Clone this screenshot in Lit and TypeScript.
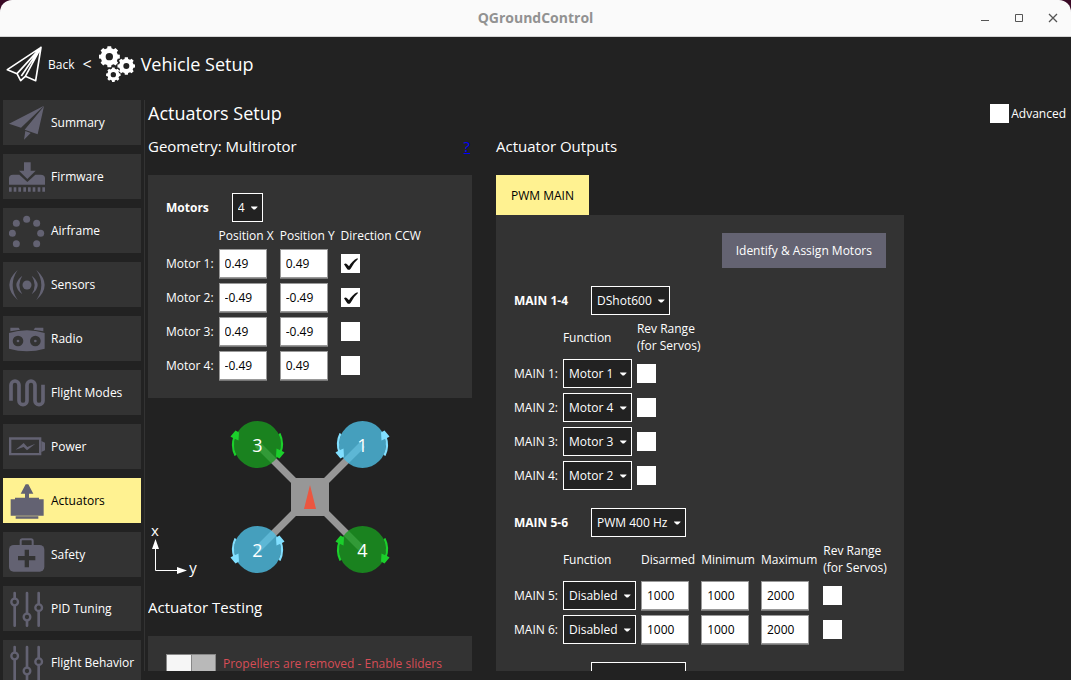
import { LitElement, html, svg, css, nothing } from "lit";
import { customElement, property } from "lit/decorators.js";

const gear = (cx: number, cy: number, outer: number, inner: number, hole: number, teeth = 8) => {
  const points: string[] = [];
  const step = (Math.PI * 2) / teeth;
  for (let i = 0; i < teeth; i++) {
    const a = i * step - Math.PI / 2;
    for (const [offset, radius] of [[-0.32, inner], [-0.22, outer], [0.22, outer], [0.32, inner]]) {
      const t = a + offset * step;
      points.push(`${(cx + radius * Math.cos(t)).toFixed(1)} ${(cy + radius * Math.sin(t)).toFixed(1)}`);
    }
  }
  return `M${points.join("L")}Z M${cx - hole} ${cy}a${hole} ${hole} 0 1 0 ${hole * 2} 0a${hole} ${hole} 0 1 0 ${-hole * 2} 0Z`;
};

const sliders = svg`
  <path d="M17 6V104M54 6V104M89 6V104" stroke="currentColor" stroke-width="8" stroke-linecap="round"/>
  <g fill="#333" stroke="currentColor" stroke-width="7">
    <circle cx="17" cy="33" r="10"/><circle cx="54" cy="78" r="10"/><circle cx="89" cy="50" r="10"/>
  </g>`;

const icons: Record<string, unknown> = {
  plane: svg`<path d="M105 4L4 71L33 83L44 104L58 91L89 104ZM105 4L33 83M105 4L46 90M105 4L58 91" fill="none" stroke="currentColor" stroke-width="5" stroke-linejoin="round"/>`,
  gears: svg`<path fill-rule="evenodd" d="${gear(31, 32, 32, 26, 11)}${gear(82, 60, 27, 22, 9)}${gear(43, 86, 22, 18, 8)}"/>`,
  summary: svg`<path d="M105 2L0 56L36 68ZM105 4L47 74L86 88ZM49 78L65 84L45 104Z"/>`,
  firmware: svg`<path d="M45 10H65V35H80L55 60L30 35H45ZM0 77V58Q0 47 12 47H31L55 69L79 47H95Q108 47 108 58V77ZM0 85h8v13h-8zM14 85h8v13h-8zM28 85h8v13h-8zM43 85h8v13h-8zM57 85h8v13h-8zM71 85h8v13h-8zM86 85h8v13h-8zM100 85h8v13h-8z"/>`,
  airframe: svg`<circle cx="53" cy="19" r="10.5"/><circle cx="22" cy="31" r="10.5"/><circle cx="83" cy="31" r="10.5"/><circle cx="10" cy="61" r="10.5"/><circle cx="95" cy="61" r="10.5"/><circle cx="22" cy="92" r="10.5"/><circle cx="83" cy="92" r="10.5"/>`,
  sensors: svg`<circle cx="54" cy="54" r="13.5"/><path d="M26 9Q-24 54 26 99Q-4 54 26 9ZM40 26Q4 54 40 82Q22 54 40 26ZM82 9Q132 54 82 99Q112 54 82 9ZM68 26Q104 54 68 82Q86 54 68 26Z"/>`,
  radio: svg`<path d="M4 20H29L33 26L4 31ZM103 20H78L74 26L103 31Z"/><path d="M0 36Q54 20 107 36V83Q54 98 0 83Z"/><g fill="#333"><circle cx="27" cy="60" r="16"/><circle cx="79" cy="60" r="16"/></g><circle cx="27" cy="60" r="4"/><circle cx="79" cy="60" r="4"/>`,
  modes: svg`<path d="M6 77V30a12 12 0 0 1 24 0V77a12 12 0 0 0 24 0V30a12 12 0 0 1 24 0V77a12 12 0 0 0 24 0V29" fill="none" stroke="currentColor" stroke-width="11"/>`,
  power: svg`<path d="M3.500 28.500H93.500V75.500H3.500Z" fill="none" stroke="currentColor" stroke-width="7"/><path d="M97 36L108 41V64L97 69ZM20 62L44 42L55 54L79 44L54 64L44 54Z"/>`,
  actuators: svg`<path d="M50 4H58L73 32H60V44H90V49H104V98H5V49H18V44H48V32H35ZM20 100H88V107H20Z"/>`,
  safety: svg`<path d="M35 26V12Q35 7 40 7H66Q71 7 71 12V26" fill="none" stroke="currentColor" stroke-width="6"/><rect x="0" y="24" width="106" height="80" rx="14"/><path d="M47 38H60V57H79V70H60V91H47V70H27V57H47Z" fill="#333"/>`,
  sliders,
};

const icon = (name: string) =>
  html`<svg class="icon" viewBox="0 0 108 108" fill="currentColor" aria-hidden="true">${icons[name]}</svg>`;

const baseStyles = css`
  *, *::before, *::after { box-sizing: border-box; }
  button, input, select { font: inherit; margin: 0; border-radius: 0; }
  .icon { width: 36px; height: 36px; flex: none; display: block; }
`;

@customElement("qgc-select")
class QgcSelect extends LitElement {
  @property() value = "";
  @property() label = "";

  static styles = [baseStyles, css`
    :host { display: inline-grid; vertical-align: top; align-items: center; }
    select, .caret { grid-area: 1 / 1; }
    select {
      appearance: none; height: 29px; padding: 0 17px 0 5px; border: 1px solid #fff;
      background: #222; color: #fff; line-height: 17px;
    }
    .caret { justify-self: end; margin-right: 5px; width: 7px; height: 4px; pointer-events: none; }
  `];

  render() {
    return html`
      <select aria-label=${this.label}><option>${this.value}</option></select>
      <svg class="caret" viewBox="0 0 7 4" aria-hidden="true"><path d="M0 0.500H6.500V1L4 3.500H2.500L0 1Z" fill="#fff"/></svg>`;
  }
}

@customElement("qgc-check")
class QgcCheck extends LitElement {
  @property({ type: Boolean }) checked = false;
  @property() label = "";
  @property() caption = "";

  static styles = [baseStyles, css`
    :host { display: block; }
    label { display: flex; align-items: center; gap: 2px; }
    .box { display: grid; }
    input, svg { grid-area: 1 / 1; width: 19px; height: 19px; }
    input { appearance: none; background: #fff; }
    svg { visibility: hidden; pointer-events: none; }
    input:checked + svg { visibility: visible; }
  `];

  render() {
    return html`
      <label>
        <span class="box">
          <input type="checkbox" .checked=${this.checked} aria-label=${this.label || this.caption}>
          <svg viewBox="0 0 57 57" aria-hidden="true"><path d="M9 31Q14 26 18 31L24 37Q34 20 49 13L51 15Q37 27 29 44Q24 50 19 46Q14 39 9 31Z" fill="#111"/></svg>
        </span>
        ${this.caption ? html`<span>${this.caption}</span>` : nothing}
      </label>`;
  }
}

interface Rotor { id: number; x: number; y: number; ccw: boolean; }

const rotors: Rotor[] = [
  { id: 3, x: 109.5, y: 34.5, ccw: false },
  { id: 1, x: 214.5, y: 34.5, ccw: true },
  { id: 2, x: 109.5, y: 139.5, ccw: true },
  { id: 4, x: 214.5, y: 139.5, ccw: false },
];

@customElement("vehicle-diagram")
class VehicleDiagram extends LitElement {
  static styles = css`
    :host { display: block; }
    svg { display: block; width: 100%; height: 180px; }
    .number { font: 18px "Open Sans", sans-serif; fill: #fff; text-anchor: middle; }
    .axis { font: 15px "Open Sans", sans-serif; fill: #fff; text-anchor: middle; }
  `;

  render() {
    return html`
      <svg viewBox="0 0 324 180" role="img" aria-label="Motor layout">
        <path d="M109.500 34.500L214.500 139.500M214.500 34.500L109.500 139.500" stroke="#979797" stroke-width="7"/>
        <rect x="143" y="68" width="38" height="38" fill="#979797"/>
        <path d="M162 75L168 99H156Z" fill="#eb5640"/>
        ${rotors.map((r) => {
          const arrow = r.ccw ? "#81dfff" : "#1bcf2b";
          return svg`
            <g transform="translate(${r.x} ${r.y})">
              <circle r="23.500" fill=${r.ccw ? "#4fbfe5" : "#199b1f"} opacity="0.8"/>
              <g transform="scale(${r.ccw ? 1 : -1} 1)">
                <path d="M22 11A24.500 24.500 0 0 0 23 -8M-22 -11A24.500 24.500 0 0 0 -23 8" fill="none" stroke=${arrow} stroke-width="2.200"/>
                <path d="M18.500 -12L22 -14L27 -8L25.500 -7L19 -4ZM-18.500 12L-22 14L-27 8L-25.500 7L-19 4Z" fill=${arrow}/>
              </g>
              <text class="number" y="7">${r.id}</text>
            </g>`;
        })}
        <path d="M7.500 138V160.500H30" fill="none" stroke="#fff" stroke-width="1"/>
        <path d="M7.500 129L11 139H4ZM39 160.500L29 164V157Z" fill="#fff"/>
        <text class="axis" x="7" y="126">x</text>
        <text class="axis" x="45" y="163">y</text>
      </svg>`;
  }
}

const pages = [
  ["Summary", "summary"], ["Firmware", "firmware"], ["Airframe", "airframe"], ["Sensors", "sensors"],
  ["Radio", "radio"], ["Flight Modes", "modes"], ["Power", "power"], ["Actuators", "actuators"],
  ["Safety", "safety"], ["PID Tuning", "sliders"], ["Flight Behavior", "sliders"],
];

const motors = [
  { x: "0.49", y: "0.49", ccw: true },
  { x: "-0.49", y: "-0.49", ccw: true },
  { x: "0.49", y: "-0.49", ccw: false },
  { x: "-0.49", y: "0.49", ccw: false },
];

const dshotOutputs = ["Motor 1", "Motor 4", "Motor 3", "Motor 2"];
const pwmOutputs = [5, 6];

@customElement("app-root")
class AppRoot extends LitElement {
  static styles = [baseStyles, css`
    :host {
      display: flex; flex-direction: column; height: 100vh; overflow: hidden;
      background: #222; color: #fff; font: 12px/17px "Open Sans", "Noto Sans", sans-serif;
    }
    h1, h2, h3 { margin: 0; font-weight: 400; }
    .titlebar { flex: none; background: #3a0a26; }
    .titlebar-inner {
      display: grid; grid-template-columns: 1fr auto 1fr; align-items: center; height: 37px;
      background: #fafafa; border-bottom: 1px solid #d5d5d5; border-radius: 12px 12px 0 0;
    }
    .window-title { grid-column: 2; color: #929292; font-weight: 700; font-size: 14px; line-height: 20px; }
    .window-buttons { justify-self: end; display: flex; gap: 10px; padding-right: 6px; }
    .window-buttons button { width: 24px; height: 24px; padding: 0; border: 0; background: none; color: #555; }
    .window-buttons svg { display: block; width: 24px; height: 24px; }

    .toolbar { flex: none; display: flex; align-items: center; height: 54px; padding: 0 6px; }
    .back { display: flex; align-items: center; gap: 6px; padding: 0; border: 0; background: none; color: #fff; }
    .chevron { padding: 0 7px; font-size: 16px; margin-left: 1px; }
    .view-title { padding-left: 6px; font-size: 18px; line-height: 24px; }

    .workspace { flex: 1; min-height: 0; display: flex; padding-top: 9px; }
    nav { flex: none; width: 141px; padding-left: 3px; overflow: hidden; display: flex; flex-direction: column; gap: 9px; }
    .page {
      flex: none; display: flex; align-items: center; gap: 6px; height: 45px; padding: 0 6px;
      border: 0; background: #333; color: #fff; text-align: left; white-space: nowrap;
    }
    .page .icon { color: #636272; }
    .page.current { background: #fff291; color: #000; }

    .content {
      flex: 1; min-width: 0; margin: 0 0 9px 3px; padding: 0 5px 0 3px; border-left: 1px solid #333;
      display: flex; flex-direction: column;
    }
    .content-head { flex: none; display: flex; justify-content: space-between; align-items: center; height: 27px; }
    .content-head h1 { font-size: 18px; line-height: 25px; }
    .columns {
      flex: 1; min-height: 0; overflow: auto; scrollbar-width: none; padding-top: 9px;
      display: flex; align-items: flex-start; gap: 24px;
    }
    .geometry { flex: none; width: 324px; }
    .outputs { flex: none; }
    .section-head { display: flex; justify-content: space-between; padding: 0 2px 18px 0; }
    h2, .section-head a { font-size: 15px; line-height: 21px; }
    .section-head a { color: #00f; }
    .panel { background: #333; padding: 18px; }
    .diagram { padding: 12px 0 7px; }

    .group-head { display: flex; align-items: center; gap: 23px; padding-bottom: 5px; }
    .group-head h3 { font-weight: 700; font-size: 12px; }
    .outputs .group-head h3 { min-width: 54px; }
    .group + .group { padding-top: 18px; }
    table { border-spacing: 5px; margin: -5px; }
    th, td { padding: 0; font-weight: 400; text-align: left; vertical-align: middle; white-space: nowrap; }
    thead th { padding-right: 1px; }
    td { height: 29px; }
    .value {
      display: block; width: 48px; height: 29px; padding: 0 5px; border: 1px solid #999;
      box-shadow: 0 1px #777; background: #fff; color: #000; line-height: 17px;
    }
    .tab { display: block; height: 40px; padding: 0 15px; border: 0; background: #fff291; color: #000; }
    .actions { display: flex; justify-content: flex-end; padding-bottom: 18px; }
    .action { height: 35px; padding: 0 14px; border: 0; background: #646372; color: #fff; }
    .outputs .panel { width: 408px; }

    .enable { display: flex; align-items: center; gap: 7px; color: #d74d56; white-space: nowrap; }
    .switch {
      appearance: none; flex: none; width: 50px; height: 19px; border: 1px solid #888;
      background: linear-gradient(90deg, #f6f6f6 24px, #888 24px, #888 25px, #b9b9b9 25px);
    }
  `];

  private group(title: string, value: string, rows: unknown = nothing) {
    return html`
      <section class="group">
        <div class="group-head"><h3>${title}</h3><qgc-select .value=${value} .label=${title || "Output mode"}></qgc-select></div>
        ${rows}
      </section>`;
  }

  private number(value: string, label: string) {
    return html`<input class="value" type="text" .value=${value} aria-label=${label}>`;
  }

  private motorTable() {
    return html`
      <table>
        <thead><tr><th></th><th>Position X</th><th>Position Y</th><th>Direction CCW</th></tr></thead>
        <tbody>
          ${motors.map((m, i) => html`
            <tr>
              <th scope="row">Motor ${i + 1}:</th>
              <td>${this.number(m.x, `Motor ${i + 1} position X`)}</td>
              <td>${this.number(m.y, `Motor ${i + 1} position Y`)}</td>
              <td><qgc-check .checked=${m.ccw} label="Motor ${i + 1} direction CCW"></qgc-check></td>
            </tr>`)}
        </tbody>
      </table>`;
  }

  private dshotTable() {
    return html`
      <table>
        <thead><tr><th></th><th>Function</th><th>Rev Range<br>(for Servos)</th></tr></thead>
        <tbody>
          ${dshotOutputs.map((name, i) => html`
            <tr>
              <th scope="row">MAIN ${i + 1}:</th>
              <td><qgc-select .value=${name} label="MAIN ${i + 1} function"></qgc-select></td>
              <td><qgc-check label="MAIN ${i + 1} reverse range"></qgc-check></td>
            </tr>`)}
        </tbody>
      </table>`;
  }

  private pwmTable() {
    return html`
      <table>
        <thead>
          <tr><th></th><th>Function</th><th>Disarmed</th><th>Minimum</th><th>Maximum</th><th>Rev Range<br>(for Servos)</th></tr>
        </thead>
        <tbody>
          ${pwmOutputs.map((n) => html`
            <tr>
              <th scope="row">MAIN ${n}:</th>
              <td><qgc-select value="Disabled" label="MAIN ${n} function"></qgc-select></td>
              <td>${this.number("1000", `MAIN ${n} disarmed`)}</td>
              <td>${this.number("1000", `MAIN ${n} minimum`)}</td>
              <td>${this.number("2000", `MAIN ${n} maximum`)}</td>
              <td><qgc-check label="MAIN ${n} reverse range"></qgc-check></td>
            </tr>`)}
        </tbody>
      </table>`;
  }

  render() {
    return html`
      <header class="titlebar">
        <div class="titlebar-inner">
          <span class="window-title">QGroundControl</span>
          <div class="window-buttons">
            <button aria-label="Minimize"><svg viewBox="0 0 24 24"><path d="M8 14.500H16" stroke="currentColor"/></svg></button>
            <button aria-label="Maximize"><svg viewBox="0 0 24 24"><path d="M8.500 8.500H15.500V15.500H8.500Z" fill="none" stroke="currentColor"/></svg></button>
            <button aria-label="Close"><svg viewBox="0 0 24 24"><path d="M8 8L16 16M16 8L8 16" stroke="currentColor" stroke-width="1.300"/></svg></button>
          </div>
        </div>
      </header>
      <div class="toolbar">
        <button class="back">${icon("plane")}<span>Back</span></button>
        <span class="chevron">&lt;</span>
        ${icon("gears")}
        <span class="view-title">Vehicle Setup</span>
      </div>
      <div class="workspace">
        <nav>
          ${pages.map(([name, glyph]) => html`
            <button class="page ${name === "Actuators" ? "current" : ""}">${icon(glyph)}<span>${name}</span></button>`)}
        </nav>
        <main class="content">
          <div class="content-head">
            <h1>Actuators Setup</h1>
            <qgc-check caption="Advanced"></qgc-check>
          </div>
          <div class="columns">
            <div class="geometry">
              <div class="section-head"><h2>Geometry: Multirotor</h2><a href="#geometry">?</a></div>
              <div class="panel">${this.group("Motors", "4", this.motorTable())}</div>
              <vehicle-diagram class="diagram"></vehicle-diagram>
              <div class="section-head"><h2>Actuator Testing</h2></div>
              <div class="panel">
                <label class="enable"><input class="switch" type="checkbox" role="switch">Propellers are removed - Enable sliders</label>
              </div>
            </div>
            <div class="outputs">
              <div class="section-head"><h2>Actuator Outputs</h2></div>
              <button class="tab">PWM MAIN</button>
              <div class="panel">
                <div class="actions"><button class="action">Identify &amp; Assign Motors</button></div>
                ${this.group("MAIN 1-4", "DShot600", this.dshotTable())}
                ${this.group("MAIN 5-6", "PWM 400 Hz", this.pwmTable())}
                ${this.group("", "PWM 400 Hz")}
              </div>
            </div>
          </div>
        </main>
      </div>`;
  }
}
